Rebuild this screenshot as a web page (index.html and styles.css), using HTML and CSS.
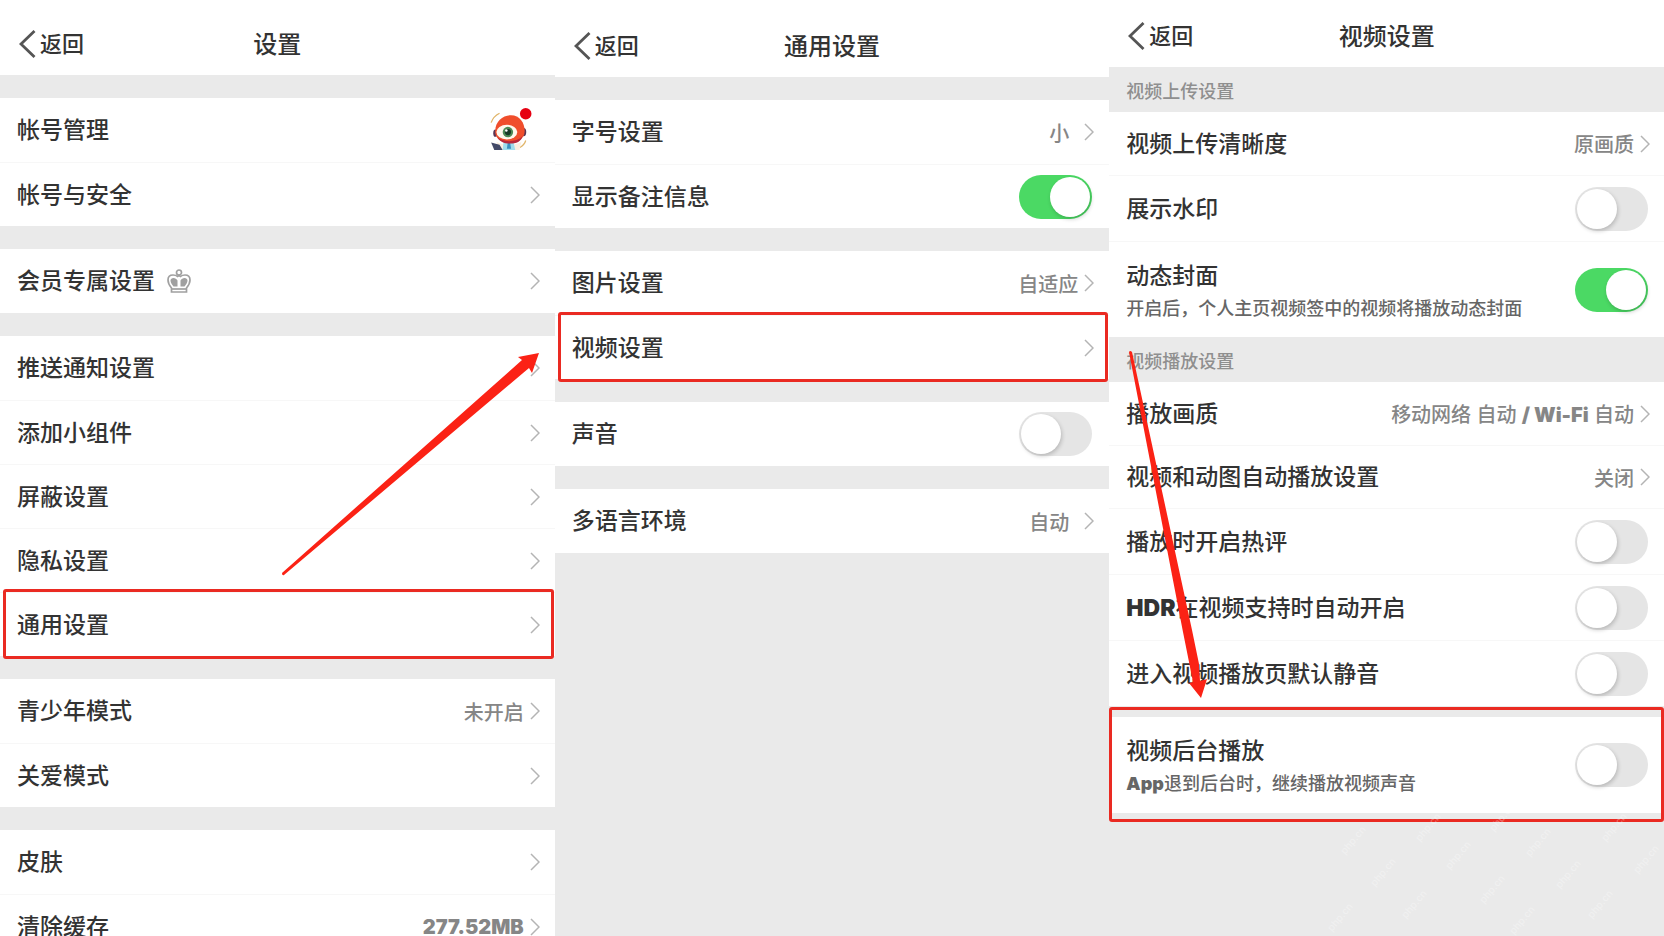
FILE: index.html
```html
<!DOCTYPE html>
<html lang="zh-CN">

<head>
    <meta charset="UTF-8">
    <meta name="viewport" content="width=device-width, initial-scale=1.0">
    <title>视频后台播放设置</title>
    <link rel="stylesheet" href="styles.css">
</head>

<body>

    <!-- Shared icons -->
    <svg class="sprite" aria-hidden="true">
        <symbol id="chevron" viewBox="0 0 10 18">
            <path d="M1 1l8 8-8 8" fill="none" stroke="#b4b4b4" stroke-width="1.500" />
        </symbol>
        <symbol id="back" viewBox="0 0 17 28">
            <path d="M15.500 1L2 14l13.500 13" fill="none" stroke="#555" stroke-width="2.800" />
        </symbol>
    </svg>

    <main class="screens">

        <!-- Settings -->
        <section class="screen screen-main">
            <header class="header">
                <button class="back" type="button"><svg class="back-icon"><use href="#back" /></svg>返回</button>
                <h1>设置</h1>
            </header>
            <nav class="group">
                <a class="row" href="#">
                    <span class="label">帐号管理</span>
                    <svg class="avatar" viewBox="0 0 42 42">
                        <path d="M3 14Q5 8 11 5M30 38q5-3 6-7" fill="none" stroke="#e0b468" stroke-width="1.200" />
                        <path d="M8 32c4 4 20 4 24 0l-2 8H10z" fill="#fbeee0" />
                        <path d="M3 33l8 2 3 5H6z" fill="#434a68" />
                        <path d="M15 31h9l2 9H14z" fill="#9fdcec" />
                        <path d="M19 32l2 0 1 7h-4z" fill="#3b8fbf" />
                        <ellipse cx="34" cy="23" rx="2.500" ry="4" fill="#5a3554" />
                        <ellipse cx="7" cy="24" rx="2" ry="3.500" fill="#5a3554" />
                        <path d="M7 24C6 13 14 7 22 7c8 0 13 7 13 15 0 7-6 11-14 11S8 30 7 24z" fill="#f04e2c" />
                        <path d="M9 28c5 5 18 5 24-1-1 5-6 7-12 7s-10-2-12-6z" fill="#b9283a" />
                        <ellipse cx="18" cy="23" rx="10" ry="7" fill="#fff8ec" />
                        <circle cx="19" cy="23" r="5" fill="#4d8a55" />
                        <circle cx="19" cy="23" r="3" fill="#173a26" />
                        <circle cx="17.500" cy="21.500" r="1.200" fill="#fff" />
                        <circle cx="36" cy="5.500" r="5.500" fill="#e60012" />
                    </svg>
                </a>
                <a class="row" href="#">
                    <span class="label">帐号与安全</span>
                    <svg class="chevron"><use href="#chevron" /></svg>
                </a>
            </nav>
            <nav class="group">
                <a class="row" href="#">
                    <span class="label">会员专属设置</span>
                    <svg class="crown" viewBox="0 0 24 24">
                        <g fill="none" stroke="#a0a0a0" stroke-width="1.700">
                            <circle cx="12" cy="3.500" r="2.500" />
                            <path d="M4.500 19C2 16 1 13.500 1 11c0-3 2-5 5-5 2 0 3.500.500 4.500 1.500L12 6.500l1.500 1C14.500 6.500 16 6 18 6c3 0 5 2 5 5 0 2.500-1 5-3.500 8v4h-15z" />
                            <path d="M5 20h14" />
                        </g>
                        <path d="M6.500 17.500C4.500 15 3.500 13 3.500 11.500c0-3.500 5.500-3.500 7 0v6zM17.500 17.500c2-2.500 3-4.500 3-6 0-3.500-5.500-3.500-7 0v6z" fill="#a0a0a0" />
                    </svg>
                    <svg class="chevron"><use href="#chevron" /></svg>
                </a>
            </nav>
            <nav class="group">
                <a class="row" href="#">
                    <span class="label">推送通知设置</span>
                    <svg class="chevron"><use href="#chevron" /></svg>
                </a>
                <a class="row" href="#">
                    <span class="label">添加小组件</span>
                    <svg class="chevron"><use href="#chevron" /></svg>
                </a>
                <a class="row" href="#">
                    <span class="label">屏蔽设置</span>
                    <svg class="chevron"><use href="#chevron" /></svg>
                </a>
                <a class="row" href="#">
                    <span class="label">隐私设置</span>
                    <svg class="chevron"><use href="#chevron" /></svg>
                </a>
                <a class="row marked" href="#">
                    <span class="label">通用设置</span>
                    <svg class="chevron"><use href="#chevron" /></svg>
                </a>
            </nav>
            <nav class="group">
                <a class="row" href="#">
                    <span class="label">青少年模式</span>
                    <span class="value">未开启</span>
                    <svg class="chevron"><use href="#chevron" /></svg>
                </a>
                <a class="row" href="#">
                    <span class="label">关爱模式</span>
                    <svg class="chevron"><use href="#chevron" /></svg>
                </a>
            </nav>
            <nav class="group">
                <a class="row" href="#">
                    <span class="label">皮肤</span>
                    <svg class="chevron"><use href="#chevron" /></svg>
                </a>
                <a class="row" href="#">
                    <span class="label">清除缓存</span>
                    <span class="value latin">277.52MB</span>
                    <svg class="chevron"><use href="#chevron" /></svg>
                </a>
            </nav>
        </section>

        <!-- General settings -->
        <section class="screen screen-general">
            <header class="header">
                <button class="back" type="button"><svg class="back-icon"><use href="#back" /></svg>返回</button>
                <h1>通用设置</h1>
            </header>
            <div class="group">
                <a class="row" href="#">
                    <span class="label">字号设置</span>
                    <span class="value value-spaced">小</span>
                    <svg class="chevron"><use href="#chevron" /></svg>
                </a>
                <label class="row">
                    <span class="label">显示备注信息</span>
                    <input class="switch" type="checkbox" checked>
                </label>
            </div>
            <div class="group">
                <a class="row" href="#">
                    <span class="label">图片设置</span>
                    <span class="value">自适应</span>
                    <svg class="chevron"><use href="#chevron" /></svg>
                </a>
                <a class="row marked" href="#">
                    <span class="label">视频设置</span>
                    <svg class="chevron"><use href="#chevron" /></svg>
                </a>
            </div>
            <div class="group">
                <label class="row">
                    <span class="label">声音</span>
                    <input class="switch" type="checkbox">
                </label>
            </div>
            <div class="group">
                <a class="row" href="#">
                    <span class="label">多语言环境</span>
                    <span class="value value-spaced">自动</span>
                    <svg class="chevron"><use href="#chevron" /></svg>
                </a>
            </div>
        </section>

        <!-- Video settings -->
        <section class="screen screen-video">
            <header class="header">
                <button class="back" type="button"><svg class="back-icon"><use href="#back" /></svg>返回</button>
                <h1>视频设置</h1>
            </header>
            <h2>视频上传设置</h2>
            <div class="list">
                <a class="row" href="#">
                    <span class="label">视频上传清晰度</span>
                    <span class="value">原画质</span>
                    <svg class="chevron"><use href="#chevron" /></svg>
                </a>
                <label class="row row-switch">
                    <span class="label">展示水印</span>
                    <input class="switch" type="checkbox">
                </label>
                <label class="row row-note">
                    <span class="texts">
                        <span class="label">动态封面</span>
                        <span class="note">开启后，个人主页视频签中的视频将播放动态封面</span>
                    </span>
                    <input class="switch" type="checkbox" checked>
                </label>
            </div>
            <h2>视频播放设置</h2>
            <div class="list">
                <a class="row" href="#">
                    <span class="label">播放画质</span>
                    <span class="value">移动网络 自动 <span class="latin">/ Wi-Fi</span> 自动</span>
                    <svg class="chevron"><use href="#chevron" /></svg>
                </a>
                <a class="row" href="#">
                    <span class="label">视频和动图自动播放设置</span>
                    <span class="value">关闭</span>
                    <svg class="chevron"><use href="#chevron" /></svg>
                </a>
                <label class="row row-switch">
                    <span class="label">播放时开启热评</span>
                    <input class="switch" type="checkbox">
                </label>
                <label class="row row-switch">
                    <span class="label"><span class="latin">HDR</span>在视频支持时自动开启</span>
                    <input class="switch" type="checkbox">
                </label>
                <label class="row row-switch">
                    <span class="label">进入视频播放页默认静音</span>
                    <input class="switch" type="checkbox">
                </label>
            </div>
            <div class="list list-last">
                <label class="row row-note marked">
                    <span class="texts">
                        <span class="label">视频后台播放</span>
                        <span class="note"><span class="latin">App</span>退到后台时，继续播放视频声音</span>
                    </span>
                    <input class="switch" type="checkbox">
                </label>
            </div>
        </section>

        <!-- Arrows and watermark over the screens -->
        <svg class="overlay" viewBox="0 0 1664 936" aria-hidden="true">
            <g fill="#fb2215">
                <path d="M282 573L522 360l-4-3 21-4-7 20-3-5L284 575q-2 1-2-2z" />
                <path d="M1129 352q1-2 3 0L1192 630l7 34 1 17 7-2-6 19-12-15 4-1-10-50z" />
            </g>
            <g class="watermark">
                <text transform="translate(1345 855) rotate(-50)">php.cn</text>
                <text transform="translate(1420 842) rotate(-50)">php.cn</text>
                <text transform="translate(1450 870) rotate(-50)">php.cn</text>
                <text transform="translate(1494 832) rotate(-50)">php.cn</text>
                <text transform="translate(1530 857) rotate(-50)">php.cn</text>
                <text transform="translate(1606 842) rotate(-50)">php.cn</text>
                <text transform="translate(1638 874) rotate(-50)">php.cn</text>
                <text transform="translate(1375 887) rotate(-50)">php.cn</text>
                <text transform="translate(1484 904) rotate(-50)">php.cn</text>
                <text transform="translate(1560 889) rotate(-50)">php.cn</text>
                <text transform="translate(1406 919) rotate(-50)">php.cn</text>
                <text transform="translate(1592 919) rotate(-50)">php.cn</text>
                <text transform="translate(1332 932) rotate(-50)">php.cn</text>
                <text transform="translate(1514 935) rotate(-50)">php.cn</text>
            </g>
        </svg>
    </main>

</body>

</html>
```

FILE: styles.css
```css
* {
    box-sizing: border-box;
}

body {
    margin: 0;
    font-family: 'Inter', 'Noto Sans CJK SC', sans-serif;
    font-weight: 500;
    background-color: #eaeaea;
    color: #333;
}

.sprite {
    display: none;
}

.screens {
    position: relative;
    display: flex;
    height: 100vh;
    overflow: hidden;
}

.screen {
    flex: 1;
    min-width: 0;
}

/* Header */
.header {
    position: relative;
    display: flex;
    align-items: center;
    justify-content: center;
    background-color: #fff;
}

.screen-main .header {
    padding-top: 13px;
}

.screen-general .header {
    padding-top: 15px;
}

.screen-video .header {
    padding-top: 5px;
}

.header h1 {
    flex: 1;
    margin: 0;
    padding: 2px 120px 0 0;
    font-size: 24px;
    font-weight: 500;
    line-height: 60px;
    text-align: center;
}

.back {
    display: flex;
    align-items: center;
    gap: 4px;
    width: 120px;
    padding: 0 0 0 19px;
    border: none;
    background: none;
    color: #333;
    font: inherit;
    font-size: 22px;
    line-height: 62px;
    cursor: pointer;
}

.back-icon {
    width: 17px;
    height: 28px;
}

/* Rows */
.group {
    margin-top: 23px;
}

.list-last {
    margin-top: 11px;
}

h2 {
    margin: 0;
    padding: 5px 17px 0;
    color: #8f8f8f;
    font-size: 18px;
    font-weight: 500;
    line-height: 40px;
}

.row {
    position: relative;
    display: flex;
    align-items: center;
    height: 64px;
    padding: 0 15px 0 17px;
    background-color: #fff;
    color: #333;
    text-decoration: none;
}

.row + .row {
    border-top: 1px solid #f7f7f7;
}

.screen-video .row {
    height: 63px;
    padding-right: 14px;
}

.screen-video .row-switch {
    height: 66px;
}

.screen-video .row-note {
    height: 96px;
}

.label {
    padding-top: 1px;
    font-size: 23px;
    line-height: 33px;
}

.texts {
    display: flex;
    flex-direction: column;
    padding-top: 4px;
}

.note {
    color: #666;
    font-size: 18px;
    line-height: 32px;
}

.value {
    margin-left: auto;
    color: #868686;
    font-size: 20px;
}

.value-spaced {
    margin-right: 9px;
}

.latin {
    font-weight: 900;
}

.chevron {
    width: 10px;
    height: 18px;
    margin-left: auto;
}

.value + .chevron {
    margin-left: 6px;
}

.crown {
    width: 24px;
    height: 24px;
    margin-left: 12px;
}

.avatar {
    width: 44px;
    height: 44px;
    margin-left: auto;
    margin-right: 8px;
}

/* Switch */
.switch {
    appearance: none;
    display: flex;
    width: 73px;
    height: 44px;
    margin: 0 2px 0 auto;
    padding: 2px;
    border-radius: 22px;
    background-color: #e5e5e5;
    cursor: pointer;
}

.switch::before {
    content: "";
    width: 40px;
    height: 40px;
    border-radius: 50%;
    background-color: #fff;
    box-shadow: 1px 2px 4px rgba(0, 0, 0, 0.2);
}

.switch:checked {
    justify-content: flex-end;
    background-color: #4bd964;
}

/* Red frame round the row to tap */
.marked::after {
    content: "";
    position: absolute;
    inset: -4px 1px -3px 3px;
    border: 3px solid #ea2a22;
    border-radius: 3px;
}

.row-note.marked::after {
    inset: -10px 0 -9px;
}

/* Overlay */
.overlay {
    position: absolute;
    inset: 0;
    width: 100%;
    height: 100%;
    pointer-events: none;
}

.watermark {
    fill: #fff;
    font-size: 10px;
    opacity: 0.3;
}
```
